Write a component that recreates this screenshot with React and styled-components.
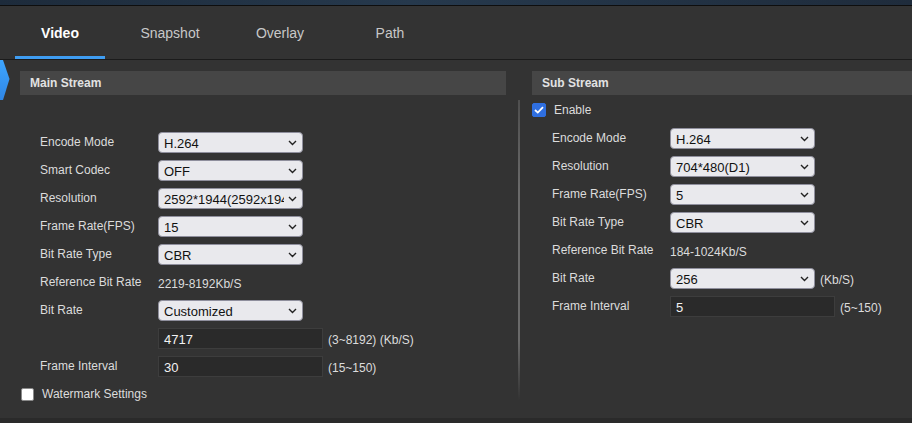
import React from "react";
import styled, { createGlobalStyle } from "styled-components";

const Global = createGlobalStyle`
  html, body { margin: 0; padding: 0; background: #333333; }
  body { font-family: "Liberation Sans", Arial, sans-serif; }
  * { box-sizing: border-box; }
`;

const Page = styled.div`
  width: 912px;
  height: 423px;
  background: #333333;
  display: flex;
  flex-direction: column;
  overflow: hidden;
`;

const TopStrip = styled.div`
  height: 6px;
  background: linear-gradient(90deg, #1d2b3b 0%, #26394d 45%, #1f2c3c 100%);
  border-bottom: 1px solid #0e0e0e;
`;

const TabBar = styled.div`
  height: 54px;
  display: flex;
  align-items: stretch;
  gap: 20px;
  padding-left: 15px;
  background: #333333;
  border-bottom: 1px solid #1b1b1b;
`;

const Tab = styled.div`
  width: 90px;
  display: flex;
  align-items: center;
  justify-content: center;
  font-size: 14px;
  font-weight: ${p => (p.$active ? 700 : 400)};
  color: ${p => (p.$active ? "#ffffff" : "#c8c8c8")};
  border-bottom: 3px solid ${p => (p.$active ? "#3f9df2" : "transparent")};
  padding-top: 3px;
`;

const Content = styled.div`
  position: relative;
  flex: 1;
  display: flex;
  padding-top: 11px;
`;

const Marker = styled.svg`
  position: absolute;
  left: 0;
  top: 0;
`;

const Column = styled.div`
  width: ${p => p.$w}px;
  margin-left: ${p => p.$ml || 0}px;
  display: flex;
  flex-direction: column;
`;

const Divider = styled.div`
  width: 26px;
  display: flex;
  justify-content: center;
  padding-top: 29px;
  padding-bottom: 18px;
  &::before {
    content: "";
    width: 2px;
    background: linear-gradient(180deg, rgba(120,120,120,0.4) 0%, #6a6a6a 30%, #6a6a6a 80%, rgba(90,90,90,0) 100%);
  }
`;

const Header = styled.div`
  height: 24px;
  background: #464646;
  color: #e2e2e2;
  font-size: 12px;
  font-weight: 700;
  display: flex;
  align-items: center;
  padding-left: 10px;
`;

const Form = styled.div`
  display: flex;
  flex-direction: column;
  gap: 7px;
  padding-left: 20px;
  margin-top: ${p => p.$mt}px;
`;

const Row = styled.div`
  height: 21px;
  display: flex;
  align-items: center;
`;

const Label = styled.div`
  width: 118px;
  font-size: 12px;
  color: #dcdcdc;
  margin-top: -2px;
`;

const SelectBox = styled.div`
  width: 145px;
  height: 21px;
  background: #e9e9ed;
  border: 1px solid #8f8f9d;
  border-radius: 4px;
  display: flex;
  align-items: center;
  padding: 0 5px 0 5px;
  font-size: 13px;
  color: #111;
  gap: 4px;
`;

const SelectText = styled.span`
  flex: 1;
  white-space: nowrap;
  overflow: hidden;
  padding-top: 1px;
`;

const Input = styled.div`
  width: 165px;
  height: 21px;
  background: #2a2a2a;
  border: 1px solid #3d3d3d;
  display: flex;
  align-items: center;
  padding-left: 5px;
  padding-top: 1px;
  font-size: 13px;
  color: #f2f2f2;
`;

const Value = styled.div`
  font-size: 12px;
  color: #dcdcdc;
  margin-top: 2px;
`;

const Unit = styled.div`
  font-size: 12px;
  color: #dcdcdc;
  margin-left: ${p => p.$ml || 5}px;
  margin-top: 2px;
`;

const CheckRow = styled.div`
  display: flex;
  align-items: center;
  gap: 8px;
  font-size: 12px;
  color: #dcdcdc;
  margin-top: ${p => p.$mt}px;
  margin-left: ${p => p.$ml || 0}px;
`;

const Box = styled.div`
  width: ${p => p.$s}px;
  height: ${p => p.$s}px;
  border-radius: 2px;
  background: ${p => (p.$checked ? "#2f6fe0" : "#ffffff")};
  border: 1px solid ${p => (p.$checked ? "#2f6fe0" : "#8a8a8a")};
  display: flex;
  align-items: center;
  justify-content: center;
`;

const Chevron = () => (
  <svg width="9" height="6" viewBox="0 0 9 6">
    <path d="M1 1 L4.5 4.5 L8 1" fill="none" stroke="#222" strokeWidth="1.4" />
  </svg>
);

const Select = ({ value }) => (
  <SelectBox>
    <SelectText>{value}</SelectText>
    <Chevron />
  </SelectBox>
);

const Field = ({ label, children }) => (
  <Row>
    <Label>{label}</Label>
    {children}
  </Row>
);

export default function App() {
  return (
    <Page>
      <Global />
      <TopStrip />
      <TabBar>
        <Tab $active>Video</Tab>
        <Tab>Snapshot</Tab>
        <Tab>Overlay</Tab>
        <Tab>Path</Tab>
      </TabBar>
      <Content>
        <Marker width="10" height="42" viewBox="0 0 10 42">
          <defs>
            <linearGradient id="mg" x1="0" y1="0" x2="0" y2="1">
              <stop offset="0" stopColor="#3ea6ff" />
              <stop offset="1" stopColor="#2f86e6" />
            </linearGradient>
          </defs>
          <path d="M0 0 L3 0 L9.5 19 L3 40 L0 40 Z" fill="url(#mg)" />
        </Marker>
        <Column $w={486} $ml={20}>
          <Header>Main Stream</Header>
          <Form $mt={37}>
            <Field label="Encode Mode"><Select value="H.264" /></Field>
            <Field label="Smart Codec"><Select value="OFF" /></Field>
            <Field label="Resolution"><Select value="2592*1944(2592x1944)" /></Field>
            <Field label="Frame Rate(FPS)"><Select value="15" /></Field>
            <Field label="Bit Rate Type"><Select value="CBR" /></Field>
            <Field label="Reference Bit Rate"><Value>2219-8192Kb/S</Value></Field>
            <Field label="Bit Rate"><Select value="Customized" /></Field>
            <Field label="">
              <Input>4717</Input>
              <Unit>(3~8192) (Kb/S)</Unit>
            </Field>
            <Field label="Frame Interval">
              <Input>30</Input>
              <Unit>(15~150)</Unit>
            </Field>
          </Form>
          <CheckRow $mt={10} $ml={1}>
            <Box $s={13} />
            <span>Watermark Settings</span>
          </CheckRow>
        </Column>
        <Divider />
        <Column $w={380}>
          <Header>Sub Stream</Header>
          <CheckRow $mt={8} $ml={0}>
            <Box $s={14} $checked>
              <svg width="10" height="8" viewBox="0 0 10 8">
                <path d="M1 4 L3.8 6.6 L9 1.2" fill="none" stroke="#fff" strokeWidth="1.8" />
              </svg>
            </Box>
            <span>Enable</span>
          </CheckRow>
          <Form $mt={11}>
            <Field label="Encode Mode"><Select value="H.264" /></Field>
            <Field label="Resolution"><Select value="704*480(D1)" /></Field>
            <Field label="Frame Rate(FPS)"><Select value="5" /></Field>
            <Field label="Bit Rate Type"><Select value="CBR" /></Field>
            <Field label="Reference Bit Rate"><Value>184-1024Kb/S</Value></Field>
            <Field label="Bit Rate">
              <Select value="256" />
              <Unit>(Kb/S)</Unit>
            </Field>
            <Field label="Frame Interval">
              <Input>5</Input>
              <Unit>(5~150)</Unit>
            </Field>
          </Form>
        </Column>
      </Content>
      <BottomBand />
    </Page>
  );
}

const BottomBand = styled.div`
  height: 5px;
  background: #2a2a2a;
`;
